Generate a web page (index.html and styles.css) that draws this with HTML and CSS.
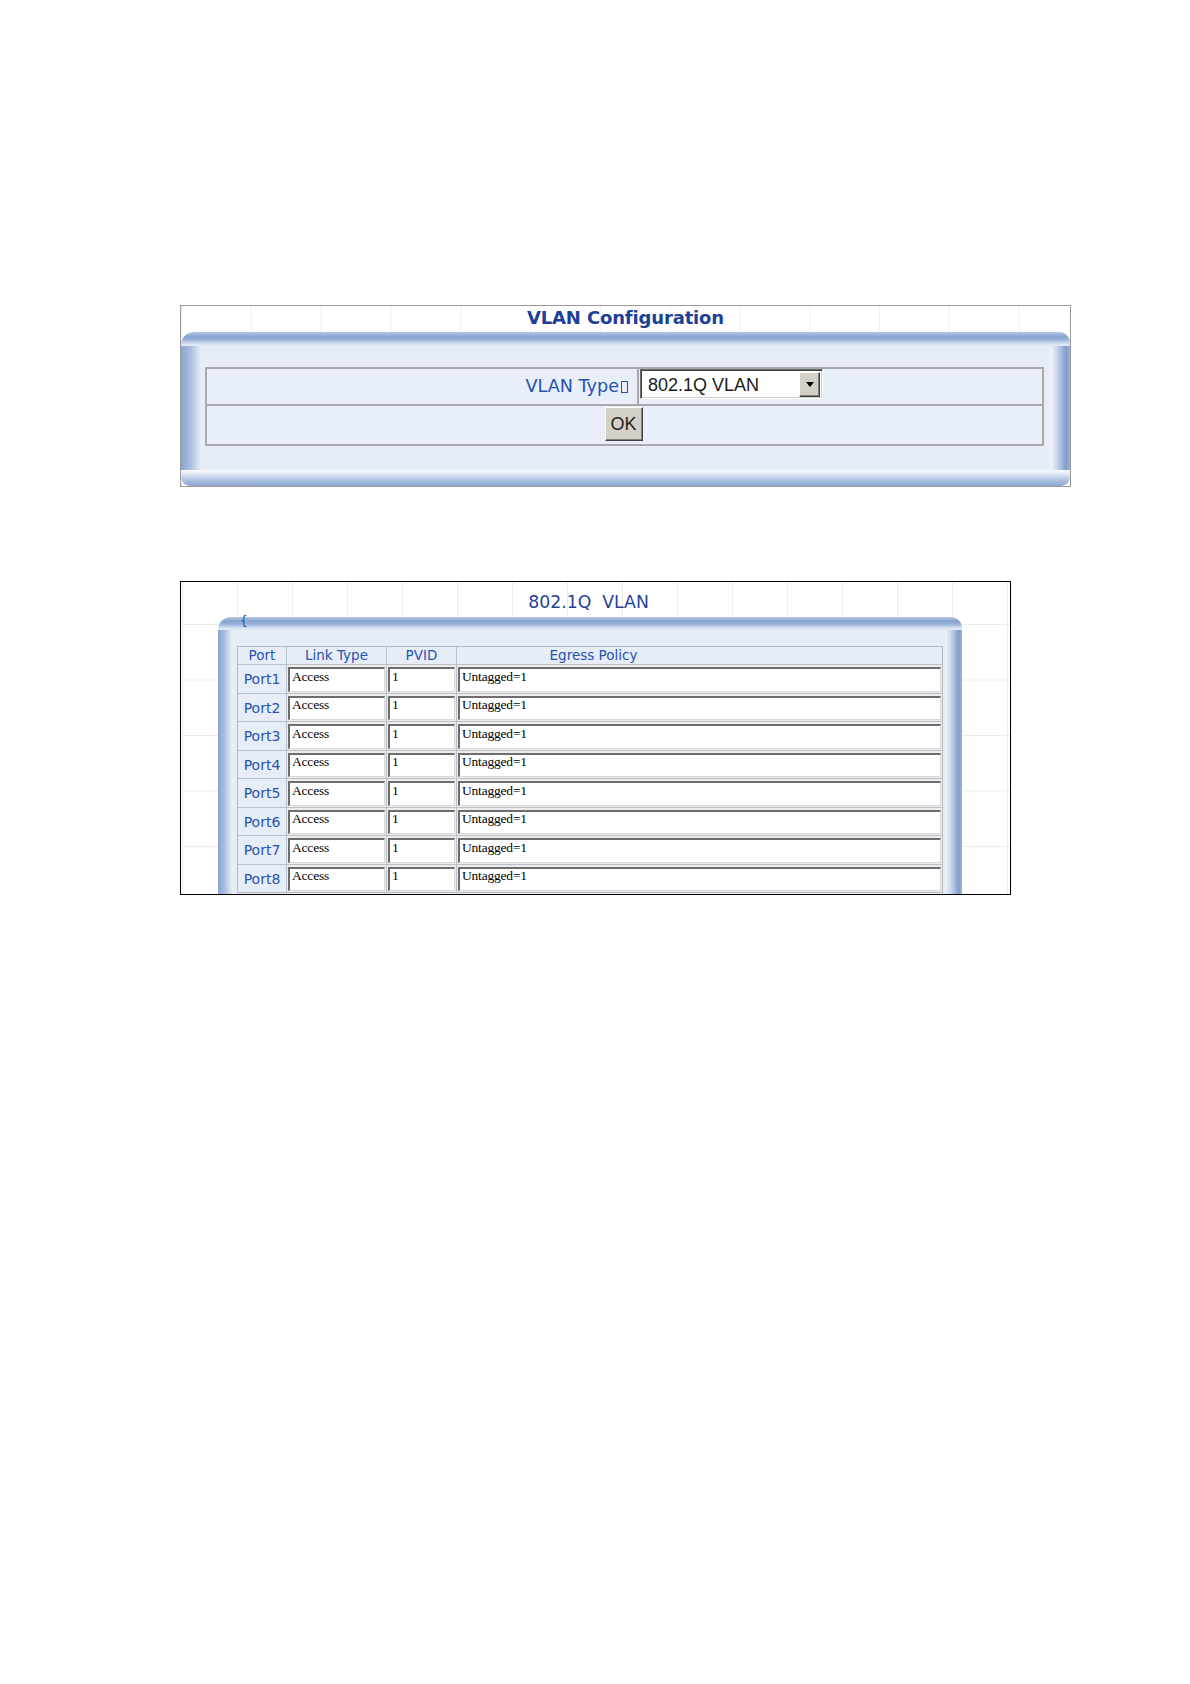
FILE: index.html
```html
<!DOCTYPE html>
<html lang="en">
<head>
<meta charset="utf-8">
<title>VLAN Configuration</title>
<link rel="stylesheet" href="styles.css">
</head>
<body>
<div class="page">
  <div class="panel panel-config">
    <div class="panel-title title-config">VLAN Configuration</div>
    <div class="frame frame-config">
      <div class="type-table">
        <div class="type-row row-type">
          <div class="type-label">VLAN Type<span class="tofu"></span></div>
          <div class="type-value">
            <div class="select">
              <span class="select-text">802.1Q VLAN</span>
              <span class="select-btn"><span class="tri"></span></span>
            </div>
          </div>
        </div>
        <div class="type-row row-ok">
          <button class="btn" type="button">OK</button>
        </div>
      </div>
    </div>
  </div>

  <div class="panel panel-vlan">
    <div class="panel-title title-vlan">802.1Q&nbsp;&nbsp;VLAN</div>
    <div class="frame frame-vlan">
      <span class="stray">{</span>
      <div class="port-grid">
        <div class="hd">Port</div>
        <div class="hd">Link Type</div>
        <div class="hd">PVID</div>
        <div class="hd hd-egress">Egress Policy</div>

        <div class="port">Port1</div>
        <div class="cell"><input class="field" type="text" value="Access" readonly></div>
        <div class="cell"><input class="field" type="text" value="1" readonly></div>
        <div class="cell"><input class="field" type="text" value="Untagged=1" readonly></div>

        <div class="port">Port2</div>
        <div class="cell"><input class="field" type="text" value="Access" readonly></div>
        <div class="cell"><input class="field" type="text" value="1" readonly></div>
        <div class="cell"><input class="field" type="text" value="Untagged=1" readonly></div>

        <div class="port">Port3</div>
        <div class="cell"><input class="field" type="text" value="Access" readonly></div>
        <div class="cell"><input class="field" type="text" value="1" readonly></div>
        <div class="cell"><input class="field" type="text" value="Untagged=1" readonly></div>

        <div class="port">Port4</div>
        <div class="cell"><input class="field" type="text" value="Access" readonly></div>
        <div class="cell"><input class="field" type="text" value="1" readonly></div>
        <div class="cell"><input class="field" type="text" value="Untagged=1" readonly></div>

        <div class="port">Port5</div>
        <div class="cell"><input class="field" type="text" value="Access" readonly></div>
        <div class="cell"><input class="field" type="text" value="1" readonly></div>
        <div class="cell"><input class="field" type="text" value="Untagged=1" readonly></div>

        <div class="port">Port6</div>
        <div class="cell"><input class="field" type="text" value="Access" readonly></div>
        <div class="cell"><input class="field" type="text" value="1" readonly></div>
        <div class="cell"><input class="field" type="text" value="Untagged=1" readonly></div>

        <div class="port">Port7</div>
        <div class="cell"><input class="field" type="text" value="Access" readonly></div>
        <div class="cell"><input class="field" type="text" value="1" readonly></div>
        <div class="cell"><input class="field" type="text" value="Untagged=1" readonly></div>

        <div class="port">Port8</div>
        <div class="cell"><input class="field" type="text" value="Access" readonly></div>
        <div class="cell"><input class="field" type="text" value="1" readonly></div>
        <div class="cell"><input class="field" type="text" value="Untagged=1" readonly></div>
      </div>
    </div>
  </div>
</div>
</body>
</html>
```

FILE: styles.css
```css
html, body {
  margin: 0;
  padding: 0;
  background: #ffffff;
}

body {
  font-family: "DejaVu Sans", Verdana, sans-serif;
  color: #2652ac;
}

.page {
  padding: 305px 0 0 180px;
}

.panel {
  box-sizing: border-box;
  position: relative;
  background-color: #ffffff;
}

.panel-config {
  width: 891px;
  height: 182px;
  border: 1px solid #9a9a9a;
  background-image: linear-gradient(to right, #f0f0f0 1px, transparent 1px);
  background-size: 69.8px 100%;
  background-position: 69.8px 0;
}

.panel-vlan {
  margin-top: 94px;
  width: 831px;
  height: 314px;
  border: 1px solid #000000;
  overflow: hidden;
  background-image:
    linear-gradient(to right, #ececec 1px, transparent 1px),
    linear-gradient(to bottom, #ececec 1px, transparent 1px);
  background-size: 55px 100%, 100% 55.5px;
  background-position: 1px 0, 0 42px;
}

.panel-title {
  text-align: center;
  color: #1c3f98;
  line-height: 22px;
}

.title-config {
  height: 26px;
  box-sizing: border-box;
  padding-top: 1px;
  font-size: 18px;
  font-weight: bold;
  letter-spacing: -0.15px;
}

.title-vlan {
  height: 35px;
  box-sizing: border-box;
  padding-top: 9px;
  padding-right: 14px;
  font-size: 17.3px;
  color: #1f4298;
}

/* blue rounded frame */
.frame {
  position: relative;
  box-sizing: border-box;
  background-color: #e6edf7;
  background-repeat: no-repeat;
}

.frame-config {
  height: 154px;
  padding: 35px 26px 40px 24px;
  border-radius: 13px 11px 9px 9px;
  background-image:
    linear-gradient(to bottom, #b7c8e5 0%, #86a3d0 35%, #9ab2da 55%, #d2def0 82%, #e6edf7 100%),
    linear-gradient(to top, #8ca6d1 0%, #b2c4e3 40%, #dfe7f4 75%, #f9fbfd 100%),
    linear-gradient(to right, #8aa4d0 0%, #a7bcdf 45%, #d5e0f0 85%, #e6edf7 100%),
    linear-gradient(to right, #f4f7fb 0%, #c9d6ec 35%, #819dcb 80%, #9cb3d9 100%);
  background-size: 100% 14px, 100% 16px, 20px 100%, 20px 100%;
  background-position: top left, bottom left, left top, right top;
}

.frame-vlan {
  margin-left: 37px;
  width: 744px;
  padding: 29px 19px 30px 19px;
  border-radius: 13px 11px 0 0;
  background-image:
    linear-gradient(to bottom, #b7c8e5 0%, #86a3d0 35%, #9ab2da 55%, #d2def0 82%, #e6edf7 100%),
    linear-gradient(to right, #8aa4d0 0%, #a7bcdf 45%, #d5e0f0 85%, #e6edf7 100%),
    linear-gradient(to right, #f4f7fb 0%, #c9d6ec 35%, #819dcb 80%, #9cb3d9 100%);
  background-size: 100% 13px, 14px 100%, 17px 100%;
  background-position: top left, left top, right top;
}

.stray {
  position: absolute;
  left: 22px;
  top: -3px;
  font-size: 12px;
  line-height: 14px;
  color: #2a55a8;
}

/* VLAN type table */
.type-table {
  border: 2px solid #a9a9a9;
  background: #e9eff8;
}

.type-row {
  display: flex;
}

.row-type {
  height: 35px;
  border-bottom: 2px solid #a9a9a9;
}

.type-label {
  width: 432px;
  box-sizing: border-box;
  border-right: 2px solid #a9a9a9;
  padding-right: 9px;
  padding-bottom: 1px;
  display: flex;
  align-items: center;
  justify-content: flex-end;
  font-size: 17.6px;
  color: #2652b0;
}

.tofu {
  display: inline-block;
  width: 5px;
  height: 10px;
  border: 1px solid #2652b0;
  margin-left: 2px;
  margin-top: 1px;
}

.type-value {
  flex: 1;
  padding-left: 1px;
}

.select {
  box-sizing: border-box;
  width: 183px;
  height: 30px;
  display: flex;
  align-items: center;
  background: #ffffff;
  border: 1px solid;
  border-color: #6a6a6a #ffffff #ffffff #6a6a6a;
  box-shadow: inset 1px 1px 0 #404040, inset -1px -1px 0 #d4d0c8;
}

.select-text {
  flex: 1;
  padding-left: 7px;
  padding-top: 2px;
  font-family: "Liberation Sans", Arial, sans-serif;
  font-size: 18px;
  color: #1a1a1a;
}

.select-btn {
  box-sizing: border-box;
  width: 21px;
  height: 25px;
  margin-right: 2px;
  margin-top: 1px;
  display: flex;
  align-items: center;
  justify-content: center;
  background: #d4d0c8;
  border: 1px solid;
  border-color: #ffffff #404040 #404040 #ffffff;
  box-shadow: inset -1px -1px 0 #808080;
}

.tri {
  width: 0;
  height: 0;
  border-left: 4.5px solid transparent;
  border-right: 4.5px solid transparent;
  border-top: 5px solid #000000;
}

.row-ok {
  height: 38px;
  justify-content: center;
  align-items: flex-start;
  padding-right: 2px;
}

.btn {
  box-sizing: border-box;
  width: 38px;
  height: 34px;
  margin-top: 1px;
  padding: 0;
  background: #d4d0c8;
  border: 1px solid;
  border-color: #ffffff #404040 #404040 #ffffff;
  box-shadow: inset -1px -1px 0 #808080;
  font-family: "Liberation Sans", Arial, sans-serif;
  font-size: 18px;
  color: #222222;
  cursor: pointer;
}

/* 802.1Q port table */
.port-grid {
  display: grid;
  grid-template-columns: 48px 99px 69px 485px;
  grid-template-rows: 17px repeat(8, 27.5px);
  gap: 1px;
  border: 1px solid #b3bac5;
  background: #b9c0cb;
}

.hd {
  background: #e6edf7;
  text-align: center;
  font-size: 13.5px;
  line-height: 17px;
  color: #2652b0;
}

.hd-egress {
  padding-right: 212px;
}

.port {
  background: #e6edf7;
  display: flex;
  align-items: center;
  justify-content: center;
  padding-top: 1px;
  box-sizing: border-box;
  font-size: 14px;
  color: #2652b0;
}

.cell {
  background: #ececec;
  padding: 2px 1px 1px 1px;
  box-sizing: border-box;
}

.field {
  display: block;
  box-sizing: border-box;
  width: 100%;
  height: 100%;
  margin: 0;
  padding: 0 2px 6px 2px;
  background: #ffffff;
  border-style: solid;
  border-width: 2px 1px 1px 2px;
  border-color: #6d6d6d #d8d8d8 #d8d8d8 #6d6d6d;
  font-family: "Liberation Serif", "Times New Roman", serif;
  font-size: 13.5px;
  letter-spacing: -0.2px;
  color: #000000;
  outline: none;
}
```
